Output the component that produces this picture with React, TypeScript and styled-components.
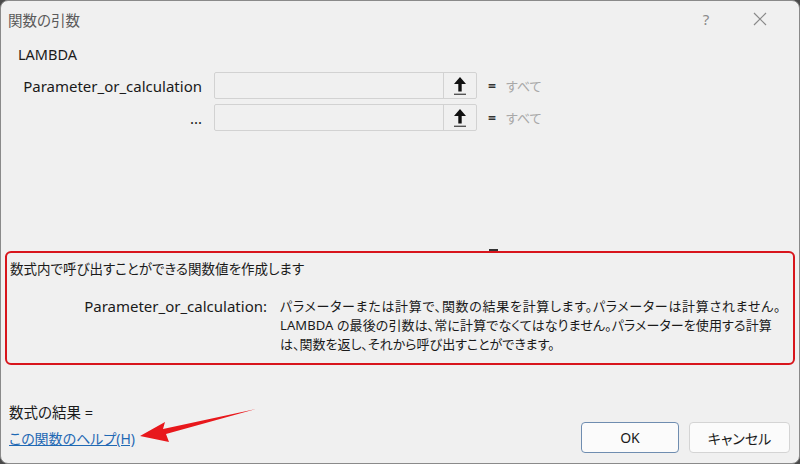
import styled, { createGlobalStyle } from 'styled-components';

const GlobalStyle = createGlobalStyle`
  html, body {
    margin: 0;
    padding: 0;
    background: #4a4a4a;
  }
  body {
    font-family: 'Noto Sans', 'Noto Sans CJK JP', sans-serif;
  }
`;

const jp = `'Noto Sans', 'Noto Sans CJK JP', sans-serif`;

const Dialog = styled.div`
  position: relative;
  box-sizing: border-box;
  width: 800px;
  height: 464px;
  background: #f0f0f0;
  border: 1px solid #8a8a8a;
  border-radius: 8px;
  display: flex;
  flex-direction: column;
  overflow: hidden;
  color: #1a1a1a;
  font-feature-settings: 'palt';
`;

const TitleBar = styled.div`
  height: 36px;
  display: flex;
  align-items: center;
  padding: 0 0 0 7px;
`;

const Title = styled.div`
  flex: 1;
  font-family: ${jp};
  font-size: 14.5px;
  color: #5a5a5a;
`;

const TitleButton = styled.div<{ $w: number }>`
  width: ${(p) => p.$w}px;
  display: flex;
  justify-content: center;
  align-items: center;
  color: #8a8a8a;
  font-size: 15px;
`;

const Body = styled.div`
  flex: 1;
  display: flex;
  flex-direction: column;
  padding: 0 4px;
`;

const FunctionName = styled.div`
  font-size: 14.5px;
  padding-left: 13px;
  height: 34px;
  display: flex;
  align-items: center;
`;

const ArgRows = styled.div`
  display: flex;
  flex-direction: column;
  gap: 5px;
  margin-top: 1px;
`;

const ArgRow = styled.div`
  display: flex;
  align-items: center;
  height: 27px;
`;

const ArgLabel = styled.div`
  width: 209px;
  text-align: right;
  font-size: 15px;
  padding-right: 12px;
  box-sizing: border-box;
  color: #1a1a1a;
`;

const InputBox = styled.div`
  box-sizing: border-box;
  width: 263px;
  height: 27px;
  border: 1px solid #d2d2d2;
  border-radius: 2px;
  background: #f0f0f0;
  display: flex;
  justify-content: flex-end;
`;

const RefButton = styled.div`
  width: 32px;
  height: 100%;
  border-left: 1px solid #d2d2d2;
  display: flex;
  align-items: center;
  justify-content: center;
`;

const Equals = styled.span`
  margin-left: 11px;
  font-size: 14px;
  font-weight: bold;
  color: #333;
`;

const ArgValue = styled.span`
  margin-left: 10px;
  font-family: ${jp};
  font-size: 13px;
  color: #a8a8a8;
`;

const ResultDash = styled.div`
  margin: auto 0 0 484px;
  width: 9px;
  height: 2px;
  background: #333;
`;

const HelpBox = styled.div`
  box-sizing: border-box;
  height: 114px;
  border: 2px solid #d8151c;
  border-radius: 6px;
  padding: 7px 0 0 3px;
  font-family: ${jp};
  font-size: 13px;
`;

const Summary = styled.div`
  line-height: 19px;
  font-size: 13.5px;
`;

const ParamHelp = styled.div`
  display: flex;
  margin-top: 18px;
`;

const ParamName = styled.div`
  width: 270px;
  flex: none;
  text-align: right;
  font-size: 15px;
  padding-right: 13px;
  box-sizing: border-box;
  line-height: 19px;
`;

const ParamText = styled.div`
  line-height: 19px;
  white-space: nowrap;
`;

const ParamLine = styled.div<{ $spacing: number }>`
  letter-spacing: ${(p) => p.$spacing}px;
`;

const Result = styled.div`
  margin-top: 36px;
  padding-left: 4px;
  font-family: ${jp};
  font-size: 14.5px;
  height: 20px;
  display: flex;
  align-items: center;
`;

const Footer = styled.div`
  display: flex;
  align-items: center;
  height: 33px;
  margin: 0 0 9px;
  padding-left: 4px;
`;

const HelpLink = styled.a`
  flex: 1;
  font-family: ${jp};
  font-size: 14px;
  color: #1f69b4;
  text-decoration: underline;
`;

const Button = styled.button<{ $primary?: boolean }>`
  width: 98px;
  height: 31px;
  margin-right: 10px;
  box-sizing: border-box;
  border-radius: 4px;
  border: ${(p) => (p.$primary ? '1.5px solid #6f8db0' : '1px solid #d4d4d4')};
  background: #fbfbfb;
  font-family: ${jp};
  font-size: 14px;
  color: #1a1a1a;
  font-feature-settings: 'palt';
  &:last-child {
    margin-right: 5px;
    width: 101px;
  }
`;

const Annotation = styled.svg`
  position: absolute;
  left: 130px;
  top: 402px;
  pointer-events: none;
`;

const RefIcon = () => (
  <svg width="16" height="20" viewBox="0 0 16 20">
    <path d="M8 1 L14 8 L9.7 8 L9.7 15.5 L6.3 15.5 L6.3 8 L2 8 Z" fill="#111" />
    <rect x="2" y="17.6" width="12" height="1.4" fill="#555" />
  </svg>
);

const args = ['Parameter_or_calculation', '...'];

const paramLines = [
  { text: 'パラメーターまたは計算で、関数の結果を計算します。パラメーターは計算されません。', spacing: 0.7 },
  { text: 'LAMBDA の最後の引数は、常に計算でなくてはなりません。パラメーターを使用する計算', spacing: 0.1 },
  { text: 'は、関数を返し、それから呼び出すことができます。', spacing: 0 },
];

const App = () => (
  <>
    <GlobalStyle />
    <Dialog>
      <TitleBar>
        <Title>関数の引数</Title>
        <TitleButton $w={30}>?</TitleButton>
        <TitleButton $w={78}>
          <svg width="14" height="14" viewBox="0 0 14 14">
            <path d="M1 1 L13 13 M13 1 L1 13" stroke="#8a8a8a" strokeWidth="1.2" />
          </svg>
        </TitleButton>
      </TitleBar>
      <Body>
        <FunctionName>LAMBDA</FunctionName>
        <ArgRows>
          {args.map((a) => (
            <ArgRow key={a}>
              <ArgLabel>{a}</ArgLabel>
              <InputBox>
                <RefButton>
                  <RefIcon />
                </RefButton>
              </InputBox>
              <Equals>=</Equals>
              <ArgValue>すべて</ArgValue>
            </ArgRow>
          ))}
        </ArgRows>
        <ResultDash />
        <HelpBox>
          <Summary>数式内で呼び出すことができる関数値を作成します</Summary>
          <ParamHelp>
            <ParamName>Parameter_or_calculation:</ParamName>
            <ParamText>
              {paramLines.map((l) => (
                <ParamLine key={l.text} $spacing={l.spacing}>
                  {l.text}
                </ParamLine>
              ))}
            </ParamText>
          </ParamHelp>
        </HelpBox>
        <Result>数式の結果 =</Result>
        <Footer>
          <HelpLink href="#">この関数のヘルプ(H)</HelpLink>
          <Button $primary>OK</Button>
          <Button>キャンセル</Button>
        </Footer>
      </Body>
      <Annotation width="130" height="44" viewBox="0 0 130 44">
        <path d="M125 6 L32 26 L34 19 L9 33 L38 39 L35 31 Z" fill="#e8181c" />
      </Annotation>
    </Dialog>
  </>
);

export default App;
